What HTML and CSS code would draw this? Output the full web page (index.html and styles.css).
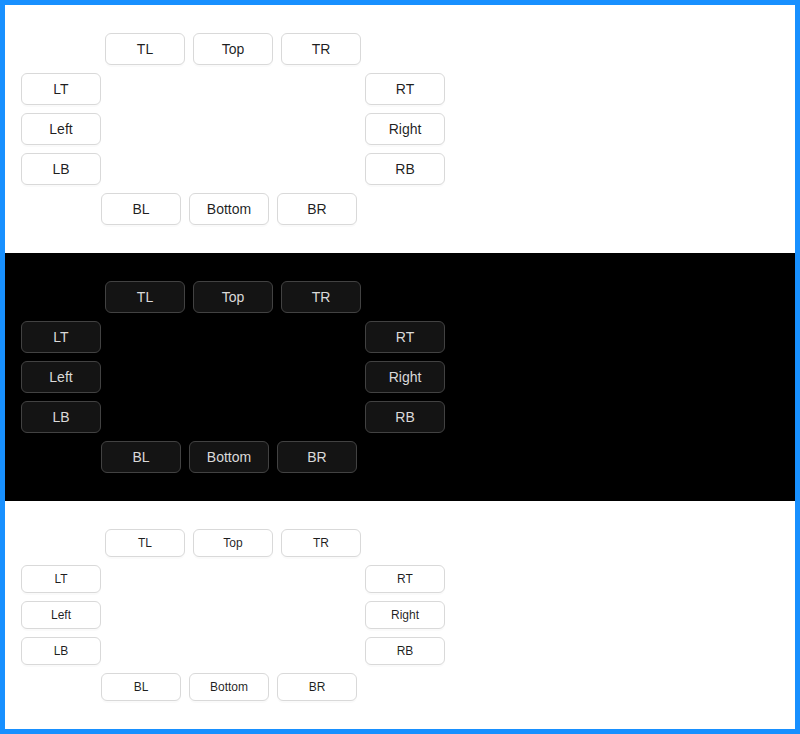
FILE: index.html
```html
<!DOCTYPE html>
<html>
<head>
<meta charset="utf-8">
<link rel="stylesheet" href="styles.css">
</head>
<body>
<div class="frame">
  <section class="demo light">
    <div class="row top"><button class="btn">TL</button><button class="btn">Top</button><button class="btn">TR</button></div>
    <div class="middle">
      <div class="col"><button class="btn">LT</button><button class="btn">Left</button><button class="btn">LB</button></div>
      <div class="col right"><button class="btn">RT</button><button class="btn">Right</button><button class="btn">RB</button></div>
    </div>
    <div class="row bottom"><button class="btn">BL</button><button class="btn">Bottom</button><button class="btn">BR</button></div>
  </section>
  <section class="demo dark">
    <div class="row top"><button class="btn">TL</button><button class="btn">Top</button><button class="btn">TR</button></div>
    <div class="middle">
      <div class="col"><button class="btn">LT</button><button class="btn">Left</button><button class="btn">LB</button></div>
      <div class="col right"><button class="btn">RT</button><button class="btn">Right</button><button class="btn">RB</button></div>
    </div>
    <div class="row bottom"><button class="btn">BL</button><button class="btn">Bottom</button><button class="btn">BR</button></div>
  </section>
  <section class="demo light small">
    <div class="row top"><button class="btn">TL</button><button class="btn">Top</button><button class="btn">TR</button></div>
    <div class="middle">
      <div class="col"><button class="btn">LT</button><button class="btn">Left</button><button class="btn">LB</button></div>
      <div class="col right"><button class="btn">RT</button><button class="btn">Right</button><button class="btn">RB</button></div>
    </div>
    <div class="row bottom"><button class="btn">BL</button><button class="btn">Bottom</button><button class="btn">BR</button></div>
  </section>
</div>
</body>
</html>
```
FILE: styles.css
```css
* { box-sizing: border-box; }
html, body { margin: 0; padding: 0; }
body {
  width: 800px;
  height: 734px;
  font-family: "Liberation Sans", Arial, sans-serif;
  background: #fff;
}
.frame {
  width: 800px;
  height: 734px;
  border: 5px solid #1890ff;
  display: flex;
  flex-direction: column;
}
.demo {
  padding: 28px 16px;
  display: flex;
  flex-direction: column;
  gap: 8px;
}
.light { background: #fff; }
.dark { background: #000; }
.row {
  display: flex;
  gap: 8px;
}
.row.top { margin-left: 84px; }
.row.bottom { margin-left: 80px; }
.middle {
  display: flex;
}
.col {
  display: flex;
  flex-direction: column;
  gap: 8px;
}
.col.right { margin-left: 264px; }
.btn {
  width: 80px;
  height: 32px;
  padding: 0;
  margin: 0;
  font-family: "Liberation Sans", Arial, sans-serif;
  font-size: 14px;
  border-radius: 6px;
  border: 1px solid #d9d9d9;
  background: #fff;
  color: rgba(0, 0, 0, 0.88);
  box-shadow: 0 2px 0 rgba(0, 0, 0, 0.02);
  cursor: pointer;
}
.dark .btn {
  background: #141414;
  border-color: #424242;
  color: rgba(255, 255, 255, 0.85);
  box-shadow: 0 2px 0 rgba(0, 0, 0, 0.02);
}
.small .btn {
  height: 28px;
  font-size: 12px;
}
```
